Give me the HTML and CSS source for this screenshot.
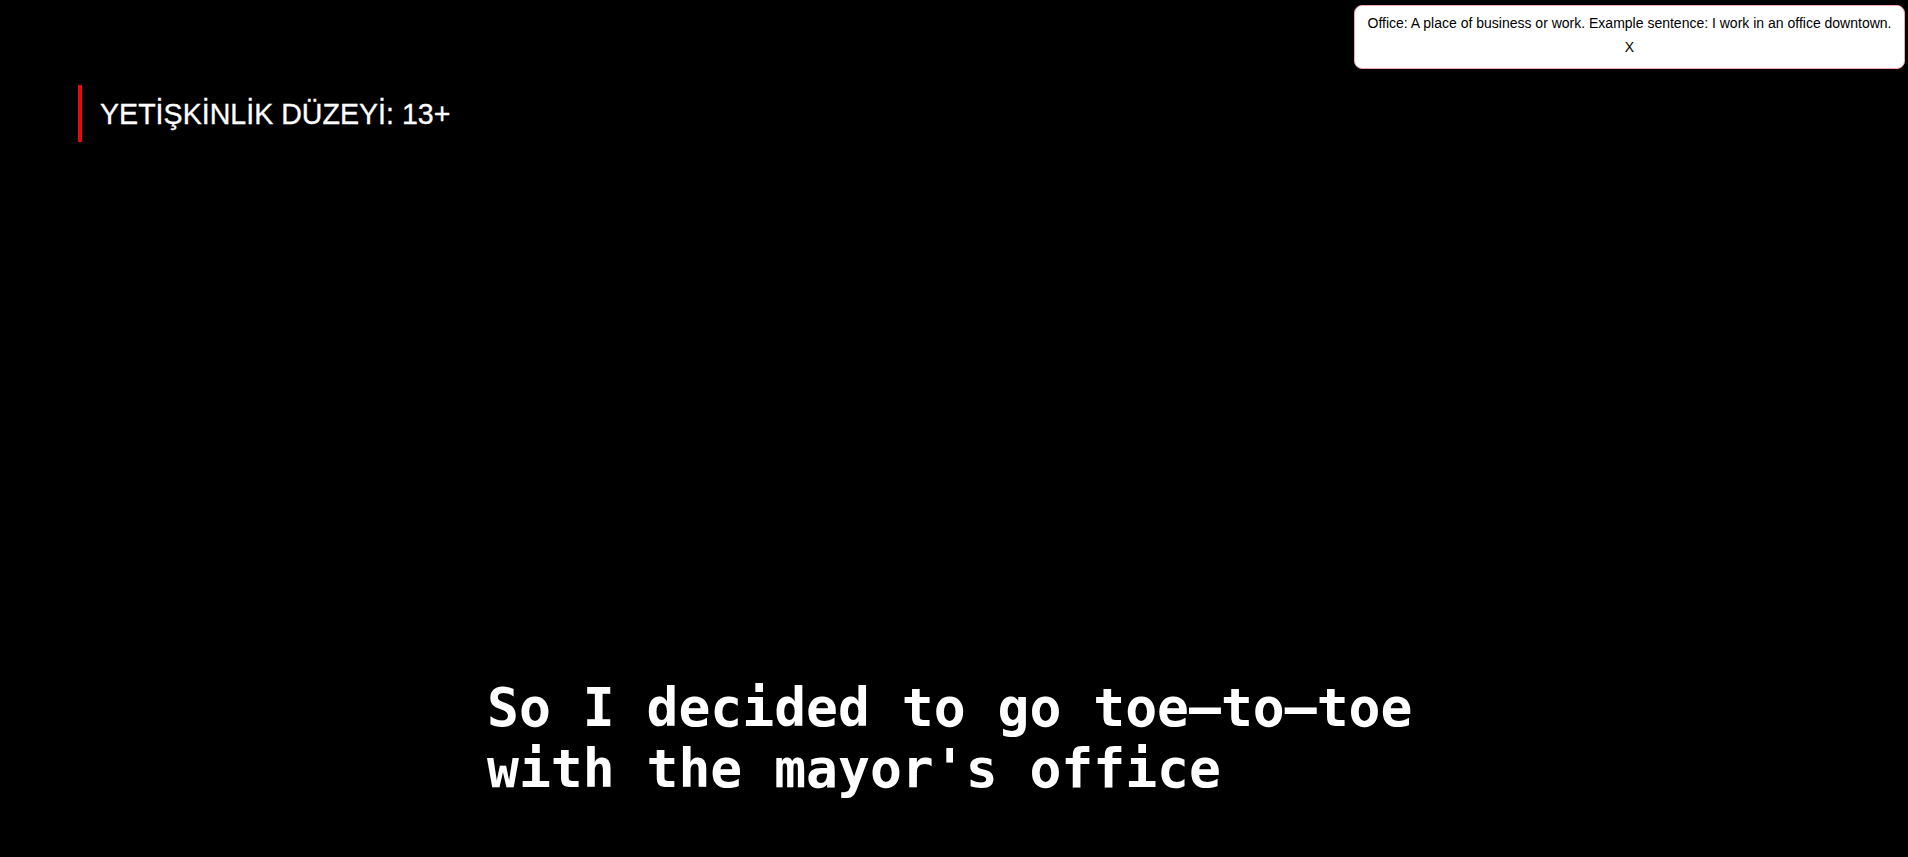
FILE: index.html
```html
<!DOCTYPE html>
<html lang="tr">
<head>
<meta charset="utf-8">
<title>Player</title>
<link rel="stylesheet" href="styles.css">
</head>
<body>
<div class="player">
  <div class="rating">YETİŞKİNLİK DÜZEYİ: 13+</div>
  <div class="subtitles">
    <div class="subtitle-text">So I decided to go toe–to–toe<br>with the mayor's office</div>
  </div>
  <div class="tooltip">
    <p class="tooltip-text">Office: A place of business or work. Example sentence: I work in an office downtown.</p>
    <button class="tooltip-close">X</button>
  </div>
</div>
</body>
</html>
```

FILE: styles.css
```css
html, body {
  margin: 0;
  padding: 0;
  background: #000;
}
.player {
  position: relative;
  width: 1908px;
  height: 857px;
  background: #000;
  display: flex;
  flex-direction: column;
  overflow: hidden;
}
.rating {
  margin-top: 85px;
  margin-left: 78px;
  align-self: flex-start;
  border-left: 4px solid #e50914;
  padding-left: 18px;
  height: 57px;
  line-height: 58px;
  font-family: "Liberation Sans", Arial, sans-serif;
  font-size: 28.6px;
  color: #fff;
  white-space: nowrap;
  -webkit-text-stroke: 0.3px #fff;
}
.subtitles {
  flex: 1;
  display: flex;
  flex-direction: column;
  justify-content: flex-end;
  align-items: center;
  padding-bottom: 58px;
}
.subtitle-text {
  font-family: "DejaVu Sans Mono", monospace;
  font-weight: bold;
  font-size: 53px;
  line-height: 61px;
  color: #fff;
  text-align: left;
  white-space: nowrap;
  width: 924px;
  margin-right: 10px;
}
.tooltip {
  position: absolute;
  top: 5px;
  right: 3px;
  width: 551px;
  height: 64px;
  box-sizing: border-box;
  background: #fff;
  border: 1px solid #f0a7ae;
  border-radius: 8px;
  padding: 8px 2px 0;
  text-align: center;
  font-family: "Liberation Sans", Arial, sans-serif;
  font-size: 14px;
  color: #000;
}
.tooltip-text {
  margin: 0;
  line-height: 18px;
  white-space: nowrap;
}
.tooltip-close {
  display: inline-block;
  margin-top: 7px;
  padding: 0;
  border: none;
  background: transparent;
  font-family: "Liberation Sans", Arial, sans-serif;
  font-size: 14px;
  line-height: 16px;
  color: #000;
  cursor: pointer;
}
```
